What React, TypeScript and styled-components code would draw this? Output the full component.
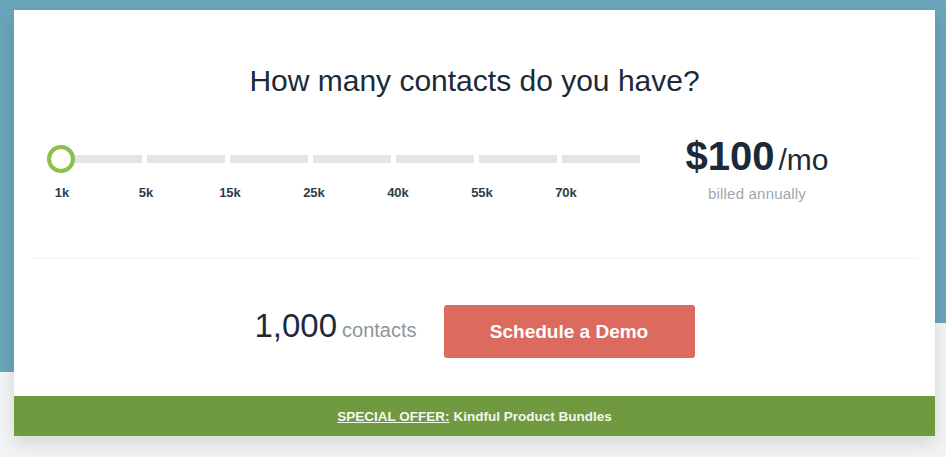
import styled, { createGlobalStyle } from 'styled-components';

const STOPS = ['1k', '5k', '15k', '25k', '40k', '55k', '70k'];

const COLOR = {
  blue: '#6aa5bb',
  pageGray: '#f3f4f4',
  navy: '#1b2a38',
  label: '#2e3c48',
  muted: '#8b969d',
  track: '#e3e6e9',
  thumb: '#8dbf4b',
  coral: '#dc6a5f',
  green: '#6f9a3f',
};

const GlobalStyle = createGlobalStyle`
  html, body {
    margin: 0;
    padding: 0;
  }
  body {
    font-family: "Liberation Sans", Arial, sans-serif;
    background: ${COLOR.pageGray};
  }
`;

const App = () => {
  return (
    <>
      <GlobalStyle />
      <Page>
        <Card>
          <Title>How many contacts do you have?</Title>
          <PricingRow>
            <Slider>
              <Track>
                {STOPS.map((stop) => (
                  <Segment key={stop} />
                ))}
              </Track>
              <Thumb />
              <Labels>
                {STOPS.map((stop) => (
                  <StopLabel key={stop}>{stop}</StopLabel>
                ))}
              </Labels>
            </Slider>
            <Price>
              <Amount>
                $100<Period>/mo</Period>
              </Amount>
              <Billing>billed annually</Billing>
            </Price>
          </PricingRow>
          <Divider />
          <ActionRow>
            <Count>
              1,000<CountUnit>contacts</CountUnit>
            </Count>
            <DemoButton>Schedule a Demo</DemoButton>
          </ActionRow>
          <OfferBar>
            <OfferLink>SPECIAL OFFER:</OfferLink> Kindful Product Bundles
          </OfferBar>
        </Card>
      </Page>
    </>
  );
};

export default App;

const Page = styled.div`
  box-sizing: border-box;
  min-height: 100vh;
  padding: 10px 11px 0 14px;
  background:
    linear-gradient(${COLOR.blue}, ${COLOR.blue}) left top / 50% 372px no-repeat,
    linear-gradient(${COLOR.blue}, ${COLOR.blue}) right top / 50% 323px no-repeat,
    ${COLOR.pageGray};
`;

const Card = styled.div`
  display: flex;
  flex-direction: column;
  background: #fff;
  padding-top: 54px;
  box-shadow: 0 8px 18px rgba(0, 0, 0, 0.12);
`;

const Title = styled.h1`
  margin: 0;
  text-align: center;
  font-size: 30px;
  line-height: 34px;
  font-weight: 400;
  color: ${COLOR.navy};
`;

const PricingRow = styled.div`
  display: flex;
  align-items: flex-start;
  margin-top: 38px;
  padding-left: 6px;
`;

const Slider = styled.div`
  position: relative;
  width: 620px;
  margin-top: 9px;
  padding-top: 10px;
`;

const Track = styled.div`
  display: flex;
  gap: 5px;
  margin-left: 44px;
`;

const Segment = styled.div`
  width: 78px;
  height: 8px;
  background: ${COLOR.track};
`;

const Thumb = styled.div`
  position: absolute;
  left: 27px;
  top: 0;
  box-sizing: border-box;
  width: 28px;
  height: 28px;
  border-radius: 50%;
  border: 4px solid ${COLOR.thumb};
  background: #fff;
`;

const Labels = styled.div`
  display: flex;
  margin-top: 22px;
`;

const StopLabel = styled.span`
  width: 84px;
  text-align: center;
  font-size: 13px;
  line-height: 16px;
  font-weight: 700;
  color: ${COLOR.label};
`;

const Price = styled.div`
  display: flex;
  flex-direction: column;
  align-items: center;
  margin-left: 42px;
  width: 150px;
`;

const Amount = styled.div`
  display: flex;
  align-items: baseline;
  height: 40px;
  font-size: 40px;
  line-height: 40px;
  font-weight: 700;
  color: ${COLOR.navy};
  white-space: nowrap;
`;

const Period = styled.span`
  margin-left: 4px;
  font-size: 30px;
  line-height: 30px;
  font-weight: 400;
`;

const Billing = styled.div`
  margin-top: 9px;
  font-size: 15px;
  line-height: 18px;
  color: #9ea7ad;
  letter-spacing: 0.2px;
`;

const Divider = styled.hr`
  margin: 55px 18px 0;
  border: 0;
  height: 1px;
  background: #eef0f1;
`;

const ActionRow = styled.div`
  display: flex;
  align-items: center;
  justify-content: center;
  gap: 27px;
  margin-top: 46px;
`;

const Count = styled.div`
  padding-bottom: 8px;
  font-size: 33px;
  line-height: 36px;
  color: ${COLOR.navy};
`;

const CountUnit = styled.span`
  margin-left: 5px;
  font-size: 20px;
  color: ${COLOR.muted};
`;

const DemoButton = styled.button`
  width: 251px;
  height: 53px;
  border: 0;
  border-radius: 3px;
  background: ${COLOR.coral};
  color: #fff;
  font-family: inherit;
  font-size: 19px;
  font-weight: 700;
  cursor: pointer;
`;

const OfferBar = styled.div`
  margin-top: 38px;
  height: 40px;
  display: flex;
  align-items: center;
  justify-content: center;
  gap: 4px;
  background: ${COLOR.green};
  color: #f4f7ef;
  font-size: 13.5px;
  font-weight: 700;
`;

const OfferLink = styled.a`
  color: inherit;
  text-decoration: underline;
`;
